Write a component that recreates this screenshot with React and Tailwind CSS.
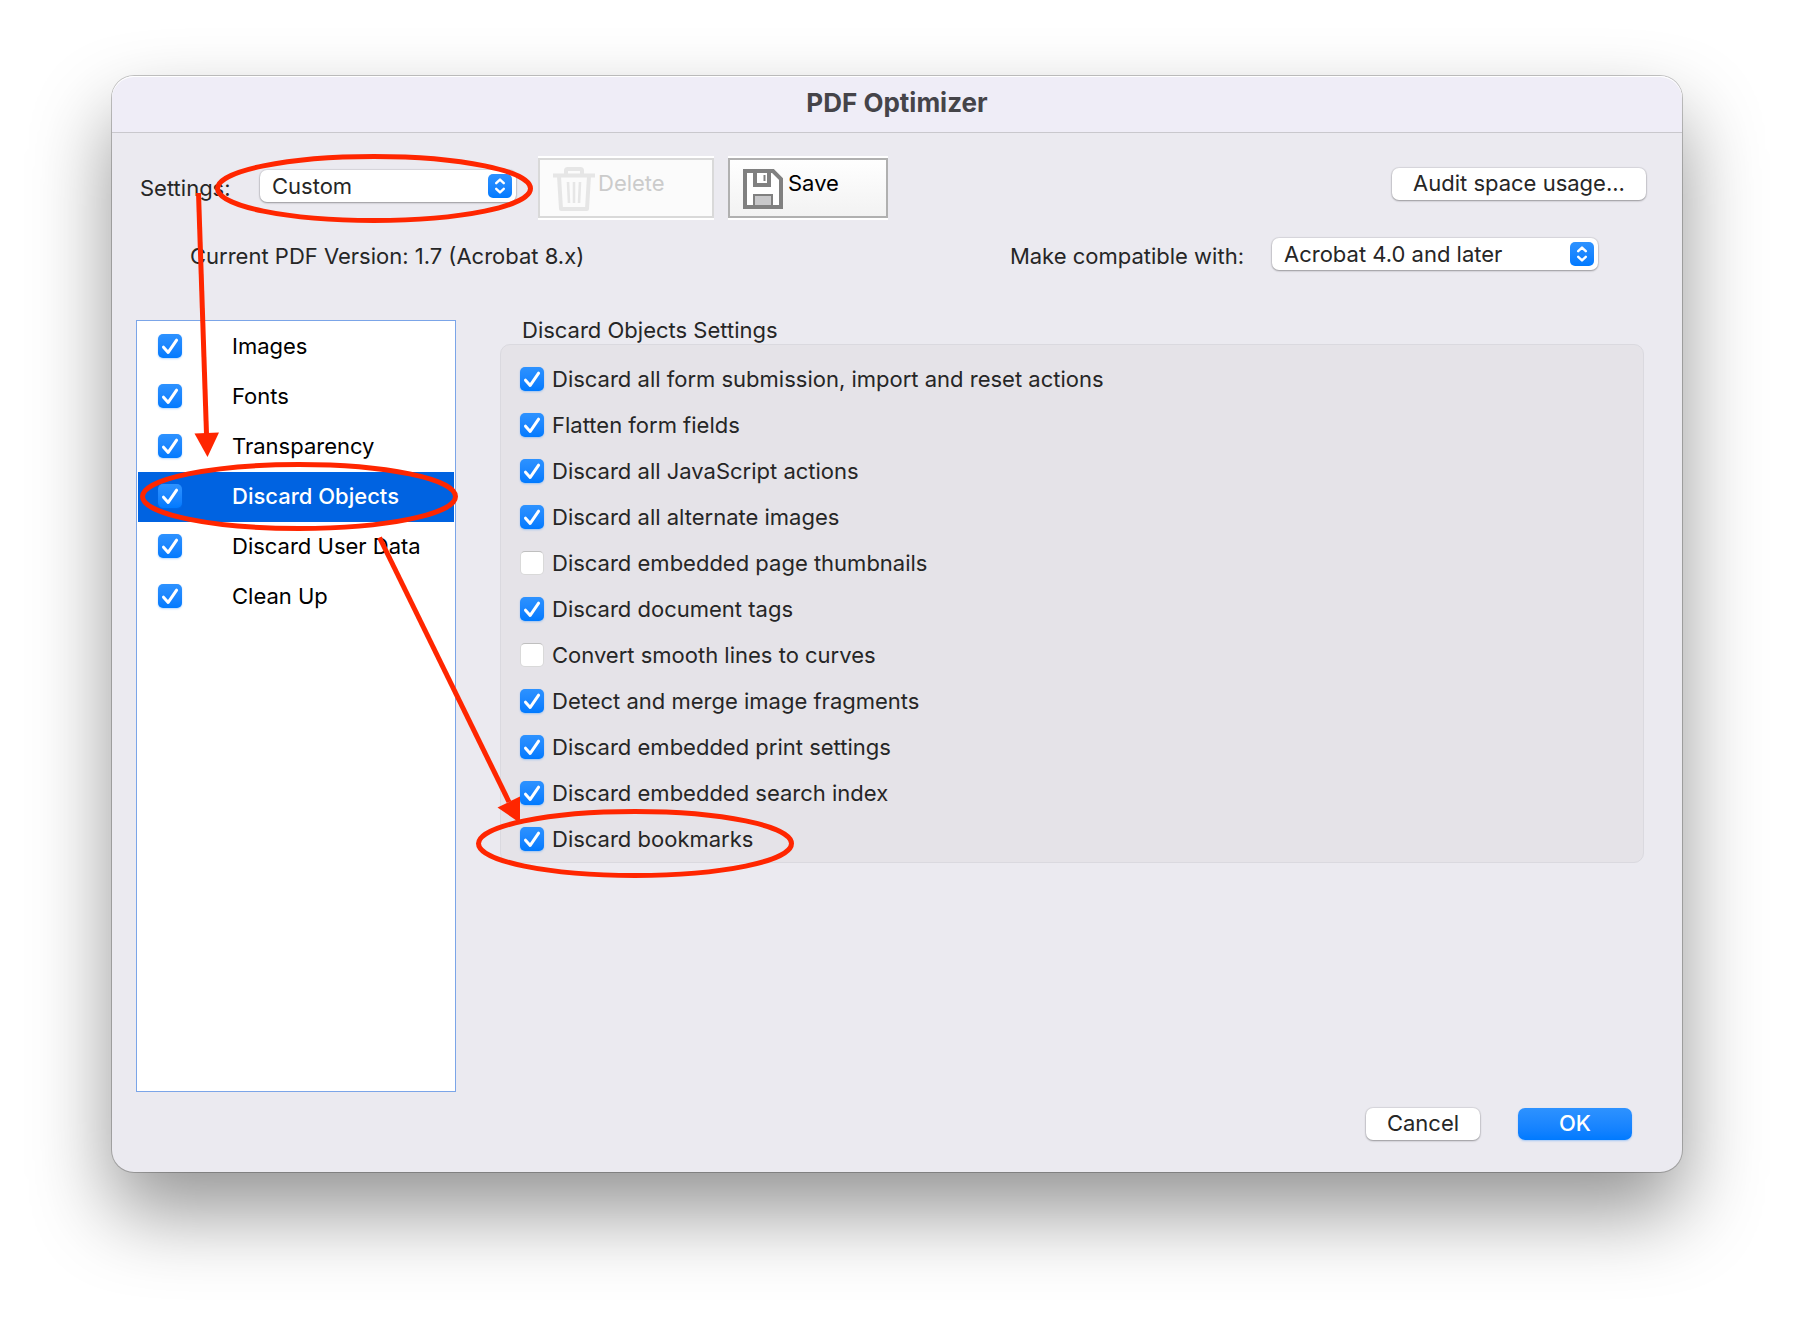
import React from "react";

const categories = ["Images", "Fonts", "Transparency", "Discard Objects", "Discard User Data", "Clean Up"];

const options = [
  ["Discard all form submission, import and reset actions", true],
  ["Flatten form fields", true],
  ["Discard all JavaScript actions", true],
  ["Discard all alternate images", true],
  ["Discard embedded page thumbnails", false],
  ["Discard document tags", true],
  ["Convert smooth lines to curves", false],
  ["Detect and merge image fragments", true],
  ["Discard embedded print settings", true],
  ["Discard embedded search index", true],
  ["Discard bookmarks", true],
];

function Checkbox({ id, checked }) {
  return (
    <span className="grid size-6 shrink-0">
      <input
        id={id}
        type="checkbox"
        defaultChecked={checked}
        className="peer col-start-1 row-start-1 size-6 appearance-none rounded-[5px] border border-black/15 border-t-black/25 bg-white checked:border-0 checked:bg-linear-to-b checked:from-[#2d92ff] checked:to-[#007aff] checked:shadow-[0_1px_2px_rgba(0,122,255,0.3)]"
      />
      <svg
        viewBox="0 0 24 24"
        className="pointer-events-none invisible col-start-1 row-start-1 size-6 peer-checked:visible"
        fill="none"
        stroke="#fff"
        strokeWidth="3"
        strokeLinecap="round"
        strokeLinejoin="round"
        aria-hidden="true"
      >
        <path d="M5.5 13.2 L10.2 18.4 L18.6 6.2" />
      </svg>
    </span>
  );
}

function PopUp({ id, value, className }) {
  return (
    <span className={`grid items-center ${className}`}>
      <select
        id={id}
        defaultValue={value}
        className="col-start-1 row-start-1 h-8 w-full appearance-none rounded-[7px] bg-white pr-9 pl-3 text-[22px] leading-8 text-[#262626] shadow-[0_0_1px_1px_rgba(0,0,0,0.08),0_1px_2px_rgba(0,0,0,0.3)]"
      >
        <option>{value}</option>
      </select>
      <span className="pointer-events-none col-start-1 row-start-1 mr-1 size-6 justify-self-end rounded-[5px] bg-linear-to-b from-[#2d92ff] to-[#007aff]">
        <svg
          viewBox="0 0 24 24"
          className="size-6"
          fill="none"
          stroke="#fff"
          strokeWidth="2.4"
          strokeLinecap="round"
          strokeLinejoin="round"
          aria-hidden="true"
        >
          <path d="M8.2 9.2 L12 5.6 L15.8 9.2 M8.2 14.8 L12 18.4 L15.8 14.8" />
        </svg>
      </span>
    </span>
  );
}

function TrashIcon() {
  return (
    <svg viewBox="0 0 44 46" className="h-[46px] w-11" fill="none" stroke="#e6e6e6" aria-hidden="true">
      <path d="M1 9.5 H43" strokeWidth="4" />
      <path d="M14 8 V4.5 Q14 3 15.5 3 H28.5 Q30 3 30 4.5 V8" strokeWidth="4" />
      <path d="M7 10 L9 43 H35 L37 10" strokeWidth="4" strokeLinejoin="round" />
      <path d="M16 16 L17 37 M22 16 V37 M28 16 L27 37" strokeWidth="2.6" />
    </svg>
  );
}

function FloppyIcon() {
  return (
    <svg viewBox="0 0 42 42" className="size-[42px]" fill="none" stroke="#808080" aria-hidden="true">
      <path d="M3 3 H31 L39 11 V39 H3 Z" strokeWidth="4" fill="#fff" />
      <path d="M13 3 V17 H27 V3" strokeWidth="4" />
      <path d="M22.5 7 V13" strokeWidth="2" />
      <path d="M12 39 V27 H30 V39" strokeWidth="2" fill="#c8c8ca" />
      <path d="M1 39 H41" strokeWidth="4" />
    </svg>
  );
}

function Annotations() {
  return (
    <svg
      className="pointer-events-none absolute top-0 left-0 h-[820px] w-[700px]"
      viewBox="112 76 700 820"
      fill="none"
      stroke="#ff2600"
      strokeWidth="5"
      aria-hidden="true"
    >
      <ellipse cx="374" cy="188.5" rx="156.5" ry="32" />
      <ellipse cx="299" cy="496.5" rx="156.5" ry="32" />
      <ellipse cx="635" cy="843.5" rx="156.5" ry="32" />
      <path d="M198.5 193 L206.5 434" />
      <path d="M194.5 433.5 L219 432.5 L207.5 457 Z" fill="#ff2600" stroke="none" />
      <path d="M379.5 537.5 L509 802" />
      <path d="M497.5 807.5 L520 796.5 L520 823 Z" fill="#ff2600" stroke="none" />
    </svg>
  );
}

const pushButton =
  "h-8 rounded-[7px] bg-white pb-0.5 leading-[30px] text-[#262626] shadow-[0_0_1px_1px_rgba(0,0,0,0.08),0_1px_2px_rgba(0,0,0,0.3)]";

export default function App() {
  return (
    <div className="min-h-screen bg-white px-28 pt-[76px] pb-[148px] font-['Inter',sans-serif] text-[22px] leading-8 text-[#262626]">
      <main className="relative rounded-[22px] bg-[#ebeaf0] shadow-[0_0_0_1px_rgba(0,0,0,0.22),0_40px_80px_rgba(0,0,0,0.42)]">
        <header className="flex h-[57px] items-center justify-center rounded-t-[22px] border-b border-[#c9c8cd] bg-[#efedf7] pb-0.5 shadow-[inset_0_1px_0_#fff]">
          <h1 className="text-[26px] font-bold text-[#454449]">PDF Optimizer</h1>
        </header>

        <div className="flex items-center pt-[23px] pr-9 pl-7">
          <label htmlFor="preset" className="w-[120px]">Settings:</label>
          <PopUp id="preset" value="Custom" className="mt-3.5 w-64 self-start" />
          <button
            disabled
            className="ml-[22px] flex h-16 w-44 border-y-2 border-white bg-[#fbfbfb] text-[#cbcbcb]"
          >
            <span className="flex h-full w-full items-center gap-0.5 border-2 border-[#d9d9d9] pt-0.5 pl-3">
              <TrashIcon />
              <span className="mb-3">Delete</span>
            </span>
          </button>
          <button className="ml-3.5 flex h-16 w-40 border-y-2 border-white bg-linear-to-b from-white to-[#f2f2f2] text-black">
            <span className="flex h-full w-full items-center gap-1 border-2 border-[#b0b0b0] pt-0.5 pl-3">
              <FloppyIcon />
              <span className="mb-3">Save</span>
            </span>
          </button>
          <button className={`mt-3 ml-auto w-[254px] self-start ${pushButton}`}>Audit space usage...</button>
        </div>

        <div className="mt-[18px] flex items-start pr-21 pl-[78px]">
          <p className="leading-9">Current PDF Version: 1.7 (Acrobat 8.x)</p>
          <label htmlFor="compat" className="mr-7 ml-auto leading-9">Make compatible with:</label>
          <PopUp id="compat" value="Acrobat 4.0 and later" className="w-[326px]" />
        </div>

        <div className="mt-[46px] flex items-start pr-[38px] pl-6">
          <ul className="min-h-[772px] w-80 shrink-0 border border-[#7ba5e8] bg-white py-px text-black">
            {categories.map((name, i) => (
              <li
                key={name}
                className={
                  i === 3
                    ? "mx-px flex h-[50px] items-center bg-[#0063e1] pb-0.5 pl-5 font-medium text-white"
                    : "mx-px flex h-[50px] items-center pb-0.5 pl-5"
                }
              >
                <Checkbox id={`category-${i}`} checked />
                <label htmlFor={`category-${i}`} className="ml-[50px]">{name}</label>
              </li>
            ))}
          </ul>

          <section className="ml-11 flex-1">
            <h2 className="-mt-1 pl-[22px] leading-7">Discard Objects Settings</h2>
            <ul className="rounded-[10px] border border-[#dad9df] bg-[#e5e3e8] pt-[11px] pl-[19px]">
              {options.map(([name, checked], i) => (
                <li key={name} className="flex h-[46px] items-center gap-2">
                  <Checkbox id={`option-${i}`} checked={checked} />
                  <label htmlFor={`option-${i}`}>{name}</label>
                </li>
              ))}
            </ul>
          </section>
        </div>

        <footer className="flex justify-end gap-[38px] pt-4 pr-[50px] pb-8">
          <button className={`w-[114px] ${pushButton}`}>Cancel</button>
          <button className="h-8 w-[114px] rounded-[7px] bg-linear-to-b from-[#2d92ff] to-[#007aff] pb-0.5 leading-[30px] font-medium text-white shadow-[0_1px_2px_rgba(0,122,255,0.3)]">
            OK
          </button>
        </footer>

        <Annotations />
      </main>
    </div>
  );
}
